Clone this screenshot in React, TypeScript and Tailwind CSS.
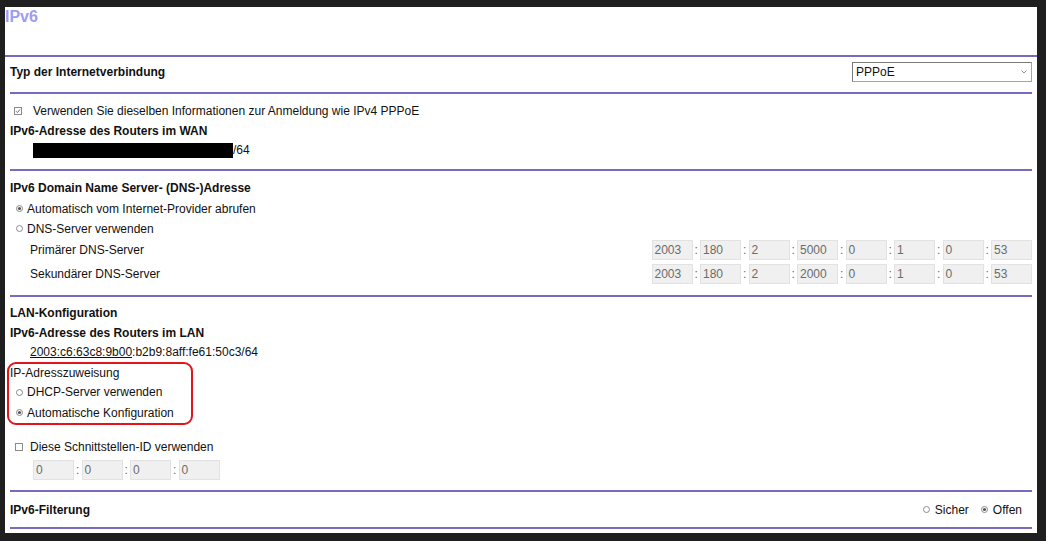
import React from "react";

const font = { fontFamily: '"Liberation Sans", Arial, sans-serif' };

function Check({ checked }: { checked?: boolean }) {
  return (
    <svg width="8" height="8" viewBox="0 0 8 8" className="shrink-0">
      <rect x="0.5" y="0.5" width="7" height="7" fill="#fff" stroke="#8a8a8a" />
      {checked && <path d="M2 4.2 L3.4 5.6 L6 2.4" fill="none" stroke="#6a6a6a" strokeWidth="1" />}
    </svg>
  );
}

function Radio({ checked }: { checked?: boolean }) {
  return (
    <svg width="7" height="7" viewBox="0 0 7 7" className="shrink-0">
      <circle cx="3.5" cy="3.5" r="3" fill="#fff" stroke="#8a8a8a" />
      {checked && <circle cx="3.5" cy="3.5" r="1.6" fill="#555" />}
    </svg>
  );
}

function Line() {
  return <div className="h-[2px] bg-[#766bbf]" />;
}

function Field({ value }: { value: string }) {
  return (
    <div className="w-[41px] h-[20px] bg-[#f0f0f0] border border-[#e2e2e2] text-[#6b6b6b] text-[12px] pl-[2px] flex items-center">
      {value}
    </div>
  );
}

function Fields({ values }: { values: string[] }) {
  return (
    <div className="flex items-center">
      {values.map((v, i) => (
        <React.Fragment key={i}>
          {i > 0 && <span className="w-[7.5px] text-center text-[#6b6b6b] text-[12px]">:</span>}
          <Field value={v} />
        </React.Fragment>
      ))}
    </div>
  );
}

export default function App() {
  return (
    <div className="w-[1046px] h-[541px] bg-[#1f1f1f] pt-[7px] pl-[5px] text-[12px] text-[#111]" style={font}>
      <div className="w-[1032px] h-[526px] bg-white">
        {/* title */}
        <div className="h-[48px] pt-[1px] text-[16px] font-bold text-[#9d9cf2] leading-[18px]">IPv6</div>
        <Line />

        <div className="px-[5px]">
          {/* Verbindungstyp */}
          <div className="flex items-center justify-between pt-[5px] pb-[10px]">
            <span className="font-bold">Typ der Internetverbindung</span>
            <div className="w-[180px] h-[20px] border border-[#a5a5a5] border-t-[#7a7a7a] border-l-[#7a7a7a] flex items-center justify-between pl-[3px] pr-[4px]">
              <span className="text-[12px]">PPPoE</span>
              <svg width="6" height="4" viewBox="0 0 6 4">
                <path d="M0.5 0.5 L3 3 L5.5 0.5" fill="none" stroke="#888" strokeWidth="0.9" />
              </svg>
            </div>
          </div>
          <Line />

          {/* WAN */}
          <div className="pt-[7px] pb-[9px]">
            <div className="h-[20px] flex items-center">
              <span className="ml-[4px] mr-[11px] flex"><Check checked /></span>
              <span>Verwenden Sie dieselben Informationen zur Anmeldung wie IPv4 PPPoE</span>
            </div>
            <div className="h-[19px] flex items-center font-bold">IPv6-Adresse des Routers im WAN</div>
            <div className="h-[20px] flex items-center pl-[23px]">
              <span className="w-[200px] h-[15px] bg-black" />
              <span>/64</span>
            </div>
          </div>
          <Line />

          {/* DNS */}
          <div className="pt-[7px] pb-[9px]">
            <div className="h-[20px] flex items-center font-bold">IPv6 Domain Name Server- (DNS-)Adresse</div>
            <div className="h-[21px] flex items-center">
              <span className="ml-[6px] mr-[4px] flex"><Radio checked /></span>
              <span>Automatisch vom Internet-Provider abrufen</span>
            </div>
            <div className="h-[19px] flex items-center">
              <span className="ml-[6px] mr-[4px] flex"><Radio /></span>
              <span>DNS-Server verwenden</span>
            </div>
            <div className="h-[24px] flex items-center justify-between pl-[20px]">
              <span>Primärer DNS-Server</span>
              <Fields values={["2003", "180", "2", "5000", "0", "1", "0", "53"]} />
            </div>
            <div className="h-[24px] flex items-center justify-between pl-[20px]">
              <span>Sekundärer DNS-Server</span>
              <Fields values={["2003", "180", "2", "2000", "0", "1", "0", "53"]} />
            </div>
          </div>
          <Line />

          {/* LAN */}
          <div className="pt-[6px] pb-[10px]">
            <div className="h-[20px] flex items-center font-bold">LAN-Konfiguration</div>
            <div className="h-[19px] flex items-center font-bold">IPv6-Adresse des Routers im LAN</div>
            <div className="h-[20px] flex items-center pl-[20px]">
              <span className="underline">2003:c6:63c8:9b00</span>
              <span>:b2b9:8aff:fe61:50c3/64</span>
            </div>
            <div className="w-[186px] -ml-[3px] pl-[1px] border-2 border-[#e4141b] rounded-[9px]">
              <div className="h-[18px] flex items-center">IP-Adresszuweisung</div>
              <div className="h-[20px] flex items-center">
                <span className="ml-[6px] mr-[4px] flex"><Radio /></span>
                <span>DHCP-Server verwenden</span>
              </div>
              <div className="h-[21px] flex items-center">
                <span className="ml-[6px] mr-[4px] flex"><Radio checked /></span>
                <span>Automatische Konfiguration</span>
              </div>
            </div>
            <div className="h-[20px] mt-[12px] flex items-center">
              <span className="ml-[5px] mr-[7px] flex"><Check /></span>
              <span>Diese Schnittstellen-ID verwenden</span>
            </div>
            <div className="mt-[3px] pl-[23px]">
              <Fields values={["0", "0", "0", "0"]} />
            </div>
          </div>
          <Line />

          {/* Filter */}
          <div className="h-[35px] flex items-center justify-between">
            <span className="font-bold">IPv6-Filterung</span>
            <div className="flex items-center pr-[10px]">
              <span className="mr-[5px] flex"><Radio /></span>
              <span>Sicher</span>
              <span className="ml-[12px] mr-[5px] flex"><Radio checked /></span>
              <span>Offen</span>
            </div>
          </div>
          <Line />
        </div>
      </div>
    </div>
  );
}
